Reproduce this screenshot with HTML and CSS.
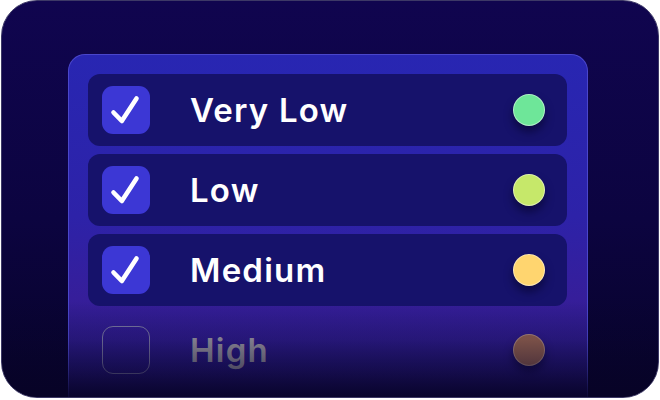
FILE: index.html
```html
<!DOCTYPE html>
<html>
<head>
<meta charset="utf-8">
<link rel="stylesheet" href="styles.css">
</head>
<body>
<div class="card">
  <div class="panel">
    <div class="row checked">
      <span class="box"><svg viewBox="0 0 48 48" width="48" height="48"><path d="M11.5 26.5 L19.8 35 L34.5 12.5" fill="none" stroke="#fff" stroke-width="4.6" stroke-linecap="round" stroke-linejoin="round"/></svg></span>
      <span class="label">Very Low</span>
      <span class="dot green"></span>
    </div>
    <div class="row checked">
      <span class="box"><svg viewBox="0 0 48 48" width="48" height="48"><path d="M11.5 26.5 L19.8 35 L34.5 12.5" fill="none" stroke="#fff" stroke-width="4.6" stroke-linecap="round" stroke-linejoin="round"/></svg></span>
      <span class="label">Low</span>
      <span class="dot lime"></span>
    </div>
    <div class="row checked">
      <span class="box"><svg viewBox="0 0 48 48" width="48" height="48"><path d="M11.5 26.5 L19.8 35 L34.5 12.5" fill="none" stroke="#fff" stroke-width="4.6" stroke-linecap="round" stroke-linejoin="round"/></svg></span>
      <span class="label">Medium</span>
      <span class="dot yellow"></span>
    </div>
    <div class="row unchecked">
      <span class="box empty"></span>
      <span class="label">High</span>
      <span class="dot orange"></span>
    </div>
  </div>
</div>
</body>
</html>
```

FILE: styles.css
```css
html, body {
  margin: 0;
  padding: 0;
  background: #ffffff;
}

.card {
  position: relative;
  box-sizing: border-box;
  width: 658px;
  height: 398px;
  margin: 0 1px;
  border: 1.5px solid #3d3966;
  border-radius: 36px;
  overflow: hidden;
  background: linear-gradient(180deg, #10054f 0%, #0c0440 55%, #070329 100%);
  padding: 53px 0 0 66px;
  font-family: Inter, "Noto Sans", sans-serif;
}

.card::after {
  content: "";
  position: absolute;
  left: 0;
  right: 0;
  top: 300px;
  bottom: 0;
  background: linear-gradient(180deg, rgba(7, 3, 38, 0) 0%, rgba(7, 3, 38, 0.15) 40%, rgba(7, 3, 38, 0.5) 72%, rgba(7, 3, 38, 0.9) 100%);
  pointer-events: none;
}

.panel {
  box-sizing: border-box;
  width: 520px;
  height: 360px;
  border: 1px solid #4a46cc;
  border-bottom: none;
  border-radius: 17px 17px 0 0;
  background: linear-gradient(180deg, #2826b2 0%, #2d22a8 45%, #361e9a 68%, #26187c 85%, #1a1060 100%);
  padding: 19px 20px 0 19px;
  display: flex;
  flex-direction: column;
  gap: 8px;
}

.row {
  height: 72px;
  border-radius: 12px;
  display: flex;
  align-items: center;
  padding: 0 22px 0 14px;
}

.row.checked {
  background: #16126b;
}

.box {
  width: 48px;
  height: 48px;
  border-radius: 11px;
  background: #3c37d5;
  flex: none;
  display: block;
}

.box svg {
  display: block;
}

.box.empty {
  box-sizing: border-box;
  background: transparent;
  border: 1.5px solid #77749f;
}

.label {
  margin-left: 40px;
  flex: 1;
  font-size: 33px;
  font-weight: 600;
  color: #ffffff;
  letter-spacing: 1.2px;
  line-height: 1;
}

.unchecked .label {
  color: #96939f;
}

.dot {
  width: 32px;
  height: 32px;
  border-radius: 50%;
  flex: none;
  box-sizing: border-box;
  border: 1px solid rgba(255, 255, 255, 0.45);
  box-shadow: 0 6px 8px rgba(4, 2, 30, 0.5);
}

.dot.green { background: #6ee699; }
.dot.lime { background: #c6e86a; }
.dot.yellow { background: #ffd56f; }
.dot.orange { background: #8e5e4e; border-color: rgba(255, 255, 255, 0.25); }
```
